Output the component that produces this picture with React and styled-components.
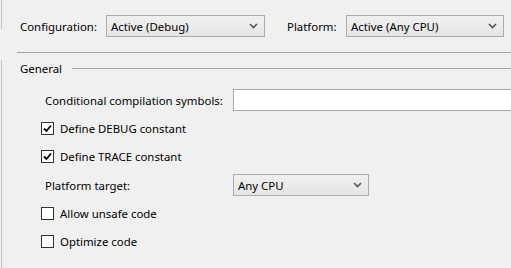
import React from "react";
import styled, { createGlobalStyle } from "styled-components";

const GlobalStyle = createGlobalStyle`
  html, body {
    margin: 0;
    padding: 0;
    background: #f0f0f0;
  }
  body {
    font-family: "Noto Sans", "Open Sans", sans-serif;
    font-size: 11.4px;
    color: #000;
  }
`;

const Page = styled.div`
  display: flex;
  width: 511px;
  height: 268px;
  overflow: hidden;
  background: #f0f0f0;
`;

const Rail = styled.div`
  box-sizing: border-box;
  display: flex;
  flex-direction: column;
  width: 3px;
  flex-shrink: 0;
  padding-left: 1px;
`;

const RailPiece = styled.div`
  border-left: 1px solid #c4c4c4;
  height: ${(p) => (p.$grow ? "auto" : `${p.$h}px`)};
  flex: ${(p) => (p.$grow ? 1 : "none")};
  margin-top: ${(p) => p.$top || 0}px;
`;

const Content = styled.div`
  flex: 1;
  display: flex;
  flex-direction: column;
  min-width: 0;
`;

const Toolbar = styled.div`
  display: flex;
  align-items: center;
  height: 22px;
  margin-top: 15px;
  padding-left: 17px;
`;

const Label = styled.span`
  white-space: nowrap;
  width: ${(p) => p.$w}px;
  flex-shrink: 0;
`;

const Select = styled.div`
  box-sizing: border-box;
  display: flex;
  align-items: center;
  width: ${(p) => p.$w}px;
  height: 22px;
  padding: 0 6px 0 4px;
  border: 1px solid #acacac;
  background: linear-gradient(#f0f0f0, #e5e5e5);
  flex-shrink: 0;
`;

const SelectText = styled.span`
  flex: 1;
  white-space: nowrap;
`;

const Chevron = () => (
  <svg width="9" height="6" viewBox="0 0 9 6">
    <path d="M1 1 L4.5 4.5 L8 1" fill="none" stroke="#555" strokeWidth="1.6" />
  </svg>
);

const Separator = styled.div`
  height: 1px;
  background: #a0a0a0;
  margin: 15px 0 0 14px;
`;

const GroupHeader = styled.div`
  display: flex;
  align-items: center;
  margin-top: 7px;
  padding-left: 17px;
  height: 16px;
`;

const HeaderLine = styled.div`
  flex: 1;
  height: 1px;
  background: #a0a0a0;
  margin-left: 10px;
`;

const Rows = styled.div`
  display: flex;
  flex-direction: column;
  padding-left: 38px;
`;

const FieldRow = styled.div`
  display: flex;
  align-items: center;
  height: 22px;
  margin-top: ${(p) => p.$top}px;
`;

const FieldLabel = styled.span`
  box-sizing: border-box;
  width: 192px;
  padding-left: 4px;
  flex-shrink: 0;
  white-space: nowrap;
`;

const TextBox = styled.div`
  flex: 1;
  height: 22px;
  box-sizing: border-box;
  border: 1px solid #acacac;
  border-right: none;
  background: #fff;
  margin-right: -2px;
`;

const CheckRow = styled.label`
  display: flex;
  align-items: center;
  height: 13px;
  margin-top: ${(p) => p.$top}px;
`;

const Box = styled.span`
  box-sizing: border-box;
  width: 13px;
  height: 13px;
  border: 1px solid #333;
  background: #fff;
  display: flex;
  align-items: center;
  justify-content: center;
  margin-right: 6px;
  flex-shrink: 0;
`;

const Check = () => (
  <svg width="9" height="9" viewBox="0 0 9 9">
    <path d="M1 4.5 L3.5 7 L8 1.5" fill="none" stroke="#000" strokeWidth="1.8" />
  </svg>
);

const CheckBox = ({ checked, children, top }) => (
  <CheckRow $top={top}>
    <Box>{checked && <Check />}</Box>
    <span>{children}</span>
  </CheckRow>
);

export default function App() {
  return (
    <Page>
      <GlobalStyle />
      <Rail>
        <RailPiece $h={29} />
        <RailPiece $grow $top={31} />
      </Rail>
      <Content>
        <Toolbar>
          <Label $w={86}>Configuration:</Label>
          <Select $w={159}>
            <SelectText>Active (Debug)</SelectText>
            <Chevron />
          </Select>
          <Label $w={59} style={{ marginLeft: 22 }}>
            Platform:
          </Label>
          <Select $w={158}>
            <SelectText>Active (Any CPU)</SelectText>
            <Chevron />
          </Select>
        </Toolbar>
        <Separator />
        <GroupHeader>
          <span>General</span>
          <HeaderLine />
        </GroupHeader>
        <Rows>
          <FieldRow $top={13}>
            <FieldLabel>Conditional compilation symbols:</FieldLabel>
            <TextBox />
          </FieldRow>
          <CheckBox checked top={11}>
            Define DEBUG constant
          </CheckBox>
          <CheckBox checked top={15}>
            Define TRACE constant
          </CheckBox>
          <FieldRow $top={11}>
            <FieldLabel>Platform target:</FieldLabel>
            <Select $w={136}>
              <SelectText>Any CPU</SelectText>
              <Chevron />
            </Select>
          </FieldRow>
          <CheckBox top={11}>Allow unsafe code</CheckBox>
          <CheckBox top={15}>Optimize code</CheckBox>
        </Rows>
      </Content>
    </Page>
  );
}
